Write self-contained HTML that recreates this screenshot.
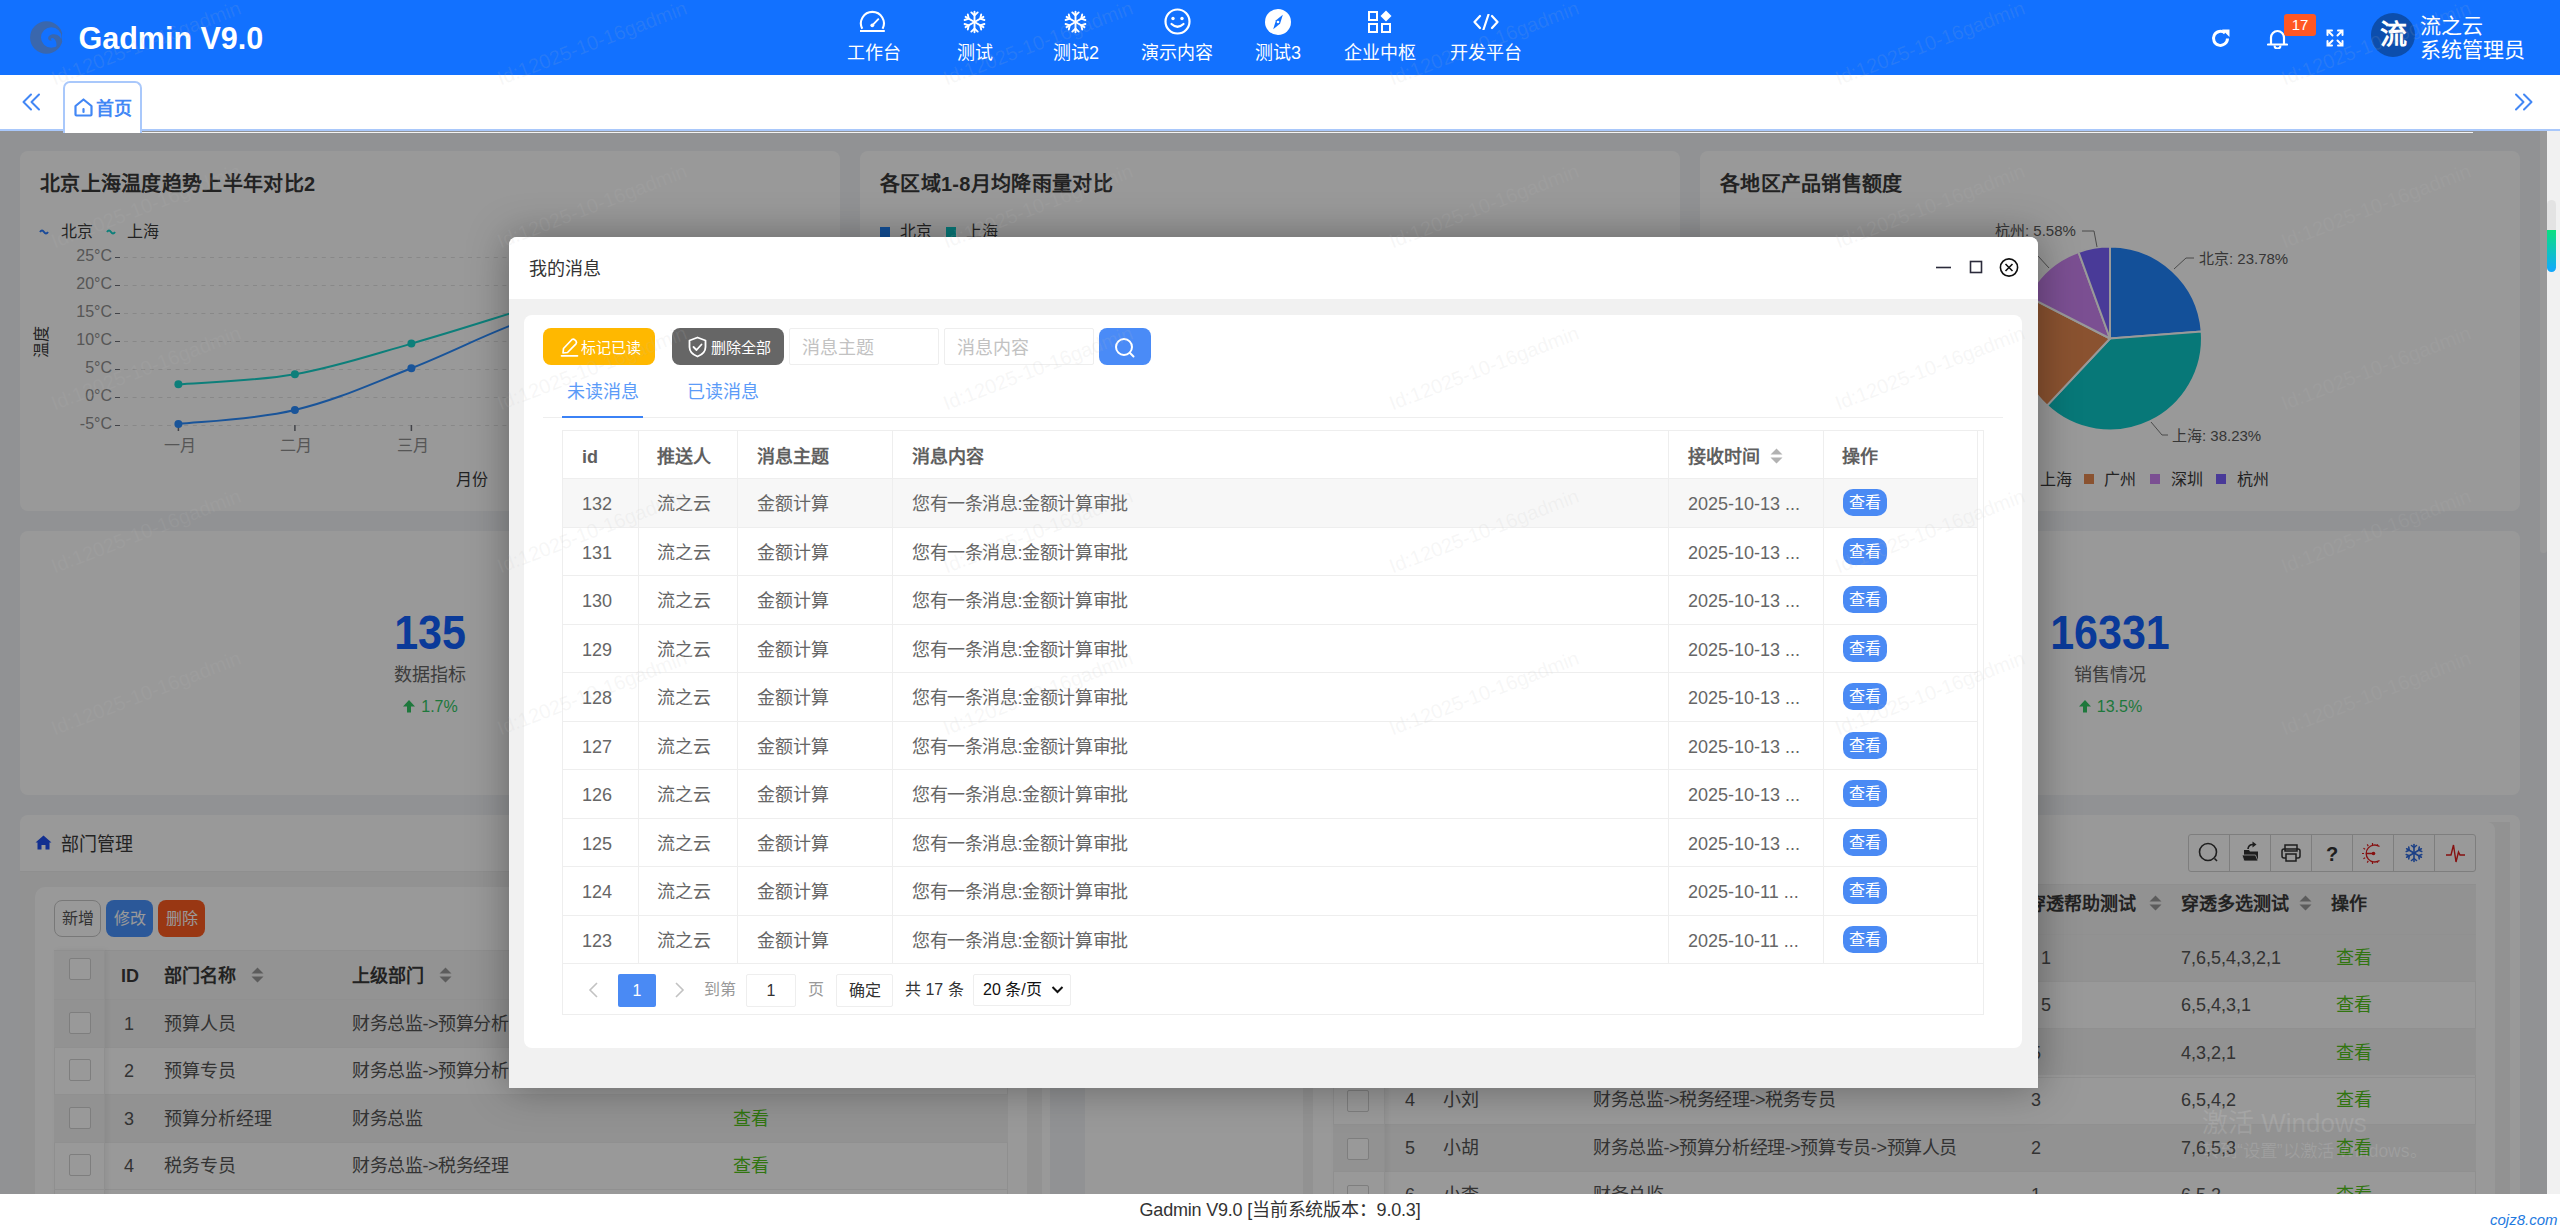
<!DOCTYPE html>
<html lang="zh-CN">
<head>
<meta charset="utf-8">
<style>
*{box-sizing:border-box;margin:0;padding:0}
html,body{width:2560px;height:1229px;overflow:hidden;background:#fff;font-family:"Liberation Sans",sans-serif;color:#333}
.a{position:absolute;white-space:nowrap}
#hdr{position:absolute;left:0;top:0;width:2560px;height:75px;background:#1271ff}
.nav{position:absolute;top:44px;font-size:18px;line-height:18px;color:#fff;text-align:center;width:120px}
.nico{position:absolute}
#tabs{position:absolute;left:0;top:0;width:2560px;height:0}
#dash{position:absolute;left:0;top:0;width:2547px;height:1194px;clip-path:inset(131px 0 0 0);background:#f2f4f7;overflow:hidden}
.card{position:absolute;background:#fff;border-radius:8px}
.ctitle{position:absolute;font-size:20px;line-height:20px;font-weight:bold;color:#333}
#ovl{position:absolute;left:0;top:0;width:2547px;height:1194px;background:rgba(0,0,0,.4)}
#modal{position:absolute;left:509px;top:237px;width:1529px;height:851px;background:#f1f1f1;border-radius:8px 8px 0 0;box-shadow:0 0 40px rgba(0,0,0,.35)}
#mtitle{position:absolute;left:0;top:0;width:1529px;height:62px;background:#fff;border-radius:8px 8px 0 0}
#mcard{position:absolute;left:15px;top:78px;width:1498px;height:733px;background:#fff;border-radius:8px}
#footer{position:absolute;left:0;top:1194px;width:2560px;height:35px;background:#fff}
</style>
</head>
<body>
<!--DASH--><div id="dash">
<div class="a" style="left:20px;top:151px;width:820px;height:360px;background:#fff;border-radius:8px"></div>
<div class="a" style="left:860px;top:151px;width:820px;height:360px;background:#fff;border-radius:8px"></div>
<div class="a" style="left:1700px;top:151px;width:820px;height:360px;background:#fff;border-radius:8px"></div>
<div class="a" style="left:20px;top:531px;width:820px;height:264px;background:#fff;border-radius:8px"></div>
<div class="a" style="left:860px;top:531px;width:820px;height:264px;background:#fff;border-radius:8px"></div>
<div class="a" style="left:1700px;top:531px;width:820px;height:264px;background:#fff;border-radius:8px"></div>
<div class="a" style="left:2540px;top:100px;width:7px;height:453px;background:#fff;border-radius:4px"></div>
<div class="a" style="left:40px;top:174px;font-size:20px;line-height:20px;color:#3a3a3a;font-weight:bold;letter-spacing:0.3px">北京上海温度趋势上半年对比2</div>
<svg class="a" style="left:0;top:0" width="2547" height="1194">
<path d="M40 232 q2 -3 4 0 q2 3 4 0" stroke="#2b7cff" stroke-width="2" fill="none"/>
<path d="M107 232 q2 -3 4 0 q2 3 4 0" stroke="#17d4cc" stroke-width="2" fill="none"/>
<line x1="124" y1="257.5" x2="820" y2="257.5" stroke="#e3e3e3" stroke-width="1" stroke-dasharray="4 4.6"/>
<line x1="115" y1="257.5" x2="120" y2="257.5" stroke="#6e7079" stroke-width="1"/>
<line x1="124" y1="285.5" x2="820" y2="285.5" stroke="#e3e3e3" stroke-width="1" stroke-dasharray="4 4.6"/>
<line x1="115" y1="285.5" x2="120" y2="285.5" stroke="#6e7079" stroke-width="1"/>
<line x1="124" y1="313.5" x2="820" y2="313.5" stroke="#e3e3e3" stroke-width="1" stroke-dasharray="4 4.6"/>
<line x1="115" y1="313.5" x2="120" y2="313.5" stroke="#6e7079" stroke-width="1"/>
<line x1="124" y1="341.5" x2="820" y2="341.5" stroke="#e3e3e3" stroke-width="1" stroke-dasharray="4 4.6"/>
<line x1="115" y1="341.5" x2="120" y2="341.5" stroke="#6e7079" stroke-width="1"/>
<line x1="124" y1="369.5" x2="820" y2="369.5" stroke="#e3e3e3" stroke-width="1" stroke-dasharray="4 4.6"/>
<line x1="115" y1="369.5" x2="120" y2="369.5" stroke="#6e7079" stroke-width="1"/>
<line x1="124" y1="397.5" x2="820" y2="397.5" stroke="#e3e3e3" stroke-width="1" stroke-dasharray="4 4.6"/>
<line x1="115" y1="397.5" x2="120" y2="397.5" stroke="#6e7079" stroke-width="1"/>
<line x1="124" y1="425.5" x2="820" y2="425.5" stroke="#e3e3e3" stroke-width="1" stroke-dasharray="4 4.6"/>
<line x1="115" y1="425.5" x2="120" y2="425.5" stroke="#6e7079" stroke-width="1"/>
<line x1="178.4" y1="425" x2="178.4" y2="431" stroke="#6e7079" stroke-width="1.5"/>
<line x1="294.9" y1="425" x2="294.9" y2="431" stroke="#6e7079" stroke-width="1.5"/>
<line x1="411.4" y1="425" x2="411.4" y2="431" stroke="#6e7079" stroke-width="1.5"/>
<line x1="527.9" y1="425" x2="527.9" y2="431" stroke="#6e7079" stroke-width="1.5"/>
<line x1="644.4" y1="425" x2="644.4" y2="431" stroke="#6e7079" stroke-width="1.5"/>
<line x1="760.9" y1="425" x2="760.9" y2="431" stroke="#6e7079" stroke-width="1.5"/>
<path d="M178.4 384.3 C199.4 382.5 253.0 381.5 294.9 374.2 C336.8 366.9 369.5 355.5 411.4 343.6 C453.3 331.7 486.0 320.9 527.9 308.0 C569.8 295.1 602.5 282.4 644.4 272.0 C686.3 261.6 739.9 254.0 760.9 250.0" fill="none" stroke="#17d4cc" stroke-width="2"/>
<path d="M178.4 424 C199.4 421.5 253.0 420.0 294.9 410.0 C336.8 400.0 369.5 384.6 411.4 368.2 C453.3 351.8 486.0 333.8 527.9 319.0 C569.8 304.2 602.5 295.5 644.4 286.0 C686.3 276.5 739.9 269.6 760.9 266.0" fill="none" stroke="#2b8cff" stroke-width="2"/>
<circle cx="178.4" cy="384.3" r="4" fill="#17d4cc"/>
<circle cx="294.9" cy="374.2" r="4" fill="#17d4cc"/>
<circle cx="411.4" cy="343.6" r="4" fill="#17d4cc"/>
<circle cx="527.9" cy="308" r="4" fill="#17d4cc"/>
<circle cx="644.4" cy="272" r="4" fill="#17d4cc"/>
<circle cx="760.9" cy="250" r="4" fill="#17d4cc"/>
<circle cx="178.4" cy="424" r="4" fill="#2b8cff"/>
<circle cx="294.9" cy="410" r="4" fill="#2b8cff"/>
<circle cx="411.4" cy="368.2" r="4" fill="#2b8cff"/>
<circle cx="527.9" cy="319" r="4" fill="#2b8cff"/>
<circle cx="644.4" cy="286" r="4" fill="#2b8cff"/>
<circle cx="760.9" cy="266" r="4" fill="#2b8cff"/>
<rect x="880" y="227" width="10" height="10" fill="#2185ff"/>
<rect x="946" y="227" width="10" height="10" fill="#0dc8c8"/>
<path d="M2110 338.5 L2110.0 246.5 A92 92 0 0 1 2201.7 331.4 Z" fill="#2185ff" stroke="#fff" stroke-width="2" stroke-linejoin="round"/>
<path d="M2110 338.5 L2201.7 331.4 A92 92 0 0 1 2047.0 405.6 Z" fill="#0dc8c8" stroke="#fff" stroke-width="2" stroke-linejoin="round"/>
<path d="M2110 338.5 L2047.0 405.6 A92 92 0 0 1 2028.0 296.7 Z" fill="#e68950" stroke="#fff" stroke-width="2" stroke-linejoin="round"/>
<path d="M2110 338.5 L2028.0 296.7 A92 92 0 0 1 2078.5 252.0 Z" fill="#cd84f3" stroke="#fff" stroke-width="2" stroke-linejoin="round"/>
<path d="M2110 338.5 L2078.5 252.0 A92 92 0 0 1 2110.0 246.5 Z" fill="#7b61fd" stroke="#fff" stroke-width="2" stroke-linejoin="round"/>
<polyline points="2174,269 2186,258 2194,258" fill="none" stroke="#7d7d7d" stroke-width="1"/>
<polyline points="2151,422 2162,435 2168,435" fill="none" stroke="#7d7d7d" stroke-width="1"/>
<polyline points="2097,247 2094,231 2082,231" fill="none" stroke="#7d7d7d" stroke-width="1"/>
<polyline points="2049,268 2038,256 2030,256" fill="none" stroke="#7d7d7d" stroke-width="1"/>
<rect x="2019" y="474" width="10" height="10" fill="#0dc8c8"/>
<rect x="2084" y="474" width="10" height="10" fill="#e68950"/>
<rect x="2150" y="474" width="10" height="10" fill="#cd84f3"/>
<rect x="2216" y="474" width="10" height="10" fill="#7b61fd"/>
</svg>
<div class="a" style="left:61px;top:224px;font-size:16px;line-height:16px;color:#3a3a3a;">北京</div>
<div class="a" style="left:127px;top:224px;font-size:16px;line-height:16px;color:#3a3a3a;">上海</div>
<div class="a" style="left:40px;top:248px;width:72px;text-align:right;font-size:16px;line-height:16px;color:#8f8f8f">25°C</div>
<div class="a" style="left:40px;top:276px;width:72px;text-align:right;font-size:16px;line-height:16px;color:#8f8f8f">20°C</div>
<div class="a" style="left:40px;top:304px;width:72px;text-align:right;font-size:16px;line-height:16px;color:#8f8f8f">15°C</div>
<div class="a" style="left:40px;top:332px;width:72px;text-align:right;font-size:16px;line-height:16px;color:#8f8f8f">10°C</div>
<div class="a" style="left:40px;top:360px;width:72px;text-align:right;font-size:16px;line-height:16px;color:#8f8f8f">5°C</div>
<div class="a" style="left:40px;top:388px;width:72px;text-align:right;font-size:16px;line-height:16px;color:#8f8f8f">0°C</div>
<div class="a" style="left:40px;top:416px;width:72px;text-align:right;font-size:16px;line-height:16px;color:#8f8f8f">-5°C</div>
<div class="a" style="left:149.9px;top:438px;width:60px;text-align:center;font-size:16px;line-height:16px;color:#8f8f8f">一月</div>
<div class="a" style="left:266.4px;top:438px;width:60px;text-align:center;font-size:16px;line-height:16px;color:#8f8f8f">二月</div>
<div class="a" style="left:382.9px;top:438px;width:60px;text-align:center;font-size:16px;line-height:16px;color:#8f8f8f">三月</div>
<div class="a" style="left:499.4px;top:438px;width:60px;text-align:center;font-size:16px;line-height:16px;color:#8f8f8f">四月</div>
<div class="a" style="left:615.9px;top:438px;width:60px;text-align:center;font-size:16px;line-height:16px;color:#8f8f8f">五月</div>
<div class="a" style="left:732.4px;top:438px;width:60px;text-align:center;font-size:16px;line-height:16px;color:#8f8f8f">六月</div>
<div class="a" style="left:456px;top:472px;font-size:16px;line-height:16px;color:#3a3a3a;">月份</div>
<div class="a" style="left:34px;top:358px;font-size:16px;line-height:16px;color:#3a3a3a;transform:rotate(-90deg);transform-origin:0 0">温度</div>
<div class="a" style="left:880px;top:174px;font-size:20px;line-height:20px;color:#3a3a3a;font-weight:bold;letter-spacing:0.3px">各区域1-8月均降雨量对比</div>
<div class="a" style="left:900px;top:224px;font-size:16px;line-height:16px;color:#3a3a3a;">北京</div>
<div class="a" style="left:966px;top:224px;font-size:16px;line-height:16px;color:#3a3a3a;">上海</div>
<div class="a" style="left:1720px;top:174px;font-size:20px;line-height:20px;color:#3a3a3a;font-weight:bold;letter-spacing:0.3px">各地区产品销售额度</div>
<div class="a" style="left:1995px;top:223px;font-size:15px;line-height:15px;color:#5a5a5a;">杭州: 5.58%</div>
<div class="a" style="left:2199px;top:251px;font-size:15px;line-height:15px;color:#5a5a5a;">北京: 23.78%</div>
<div class="a" style="left:2172px;top:428px;font-size:15px;line-height:15px;color:#5a5a5a;">上海: 38.23%</div>
<div class="a" style="left:2040px;top:472px;font-size:16px;line-height:16px;color:#3a3a3a;">上海</div>
<div class="a" style="left:2104px;top:472px;font-size:16px;line-height:16px;color:#3a3a3a;">广州</div>
<div class="a" style="left:2171px;top:472px;font-size:16px;line-height:16px;color:#3a3a3a;">深圳</div>
<div class="a" style="left:2237px;top:472px;font-size:16px;line-height:16px;color:#3a3a3a;">杭州</div>
<div class="a" style="left:280px;top:612px;width:300px;text-align:center;font-size:43px;line-height:43px;font-weight:bold;color:#1161ff;transform:scaleY(1.1)">135</div>
<div class="a" style="left:280px;top:665.5px;width:300px;text-align:center;font-size:18px;line-height:18px;color:#666">数据指标</div>
<div class="a" style="left:280px;top:698.5px;width:300px;text-align:center;font-size:16px;line-height:16px;color:#32c864"><svg width="14" height="14" viewBox="0 0 14 14" style="vertical-align:-1px;margin-right:5px"><path d="M7 1 L13 7.5 L9 7.5 L9 13.5 L5 13.5 L5 7.5 L1 7.5 Z" fill="#32c864"/></svg>1.7%</div>
<div class="a" style="left:1120px;top:612px;width:300px;text-align:center;font-size:43px;line-height:43px;font-weight:bold;color:#1161ff;transform:scaleY(1.1)">2365</div>
<div class="a" style="left:1120px;top:665.5px;width:300px;text-align:center;font-size:18px;line-height:18px;color:#666">访问量</div>
<div class="a" style="left:1120px;top:698.5px;width:300px;text-align:center;font-size:16px;line-height:16px;color:#32c864"><svg width="14" height="14" viewBox="0 0 14 14" style="vertical-align:-1px;margin-right:5px"><path d="M7 1 L13 7.5 L9 7.5 L9 13.5 L5 13.5 L5 7.5 L1 7.5 Z" fill="#32c864"/></svg>5.2%</div>
<div class="a" style="left:1960px;top:612px;width:300px;text-align:center;font-size:43px;line-height:43px;font-weight:bold;color:#1161ff;transform:scaleY(1.1)">16331</div>
<div class="a" style="left:1960px;top:665.5px;width:300px;text-align:center;font-size:18px;line-height:18px;color:#666">销售情况</div>
<div class="a" style="left:1960px;top:698.5px;width:300px;text-align:center;font-size:16px;line-height:16px;color:#32c864"><svg width="14" height="14" viewBox="0 0 14 14" style="vertical-align:-1px;margin-right:5px"><path d="M7 1 L13 7.5 L9 7.5 L9 13.5 L5 13.5 L5 7.5 L1 7.5 Z" fill="#32c864"/></svg>13.5%</div>
<div class="a" style="left:20px;top:815px;width:1030px;height:420px;background:#fff;border-radius:8px"></div>
<div class="a" style="left:20px;top:871px;width:1022px;height:360px;background:#f4f4f4;"></div>
<div class="a" style="left:20px;top:871px;width:1022px;height:1px;background:#eee;"></div>
<svg class="a" style="left:35px;top:835px" width="17" height="15" viewBox="0 0 17 15"><path d="M8.5 0.5 L0.5 7.5 L2.5 7.5 L2.5 14.5 L6.5 14.5 L6.5 10 L10.5 10 L10.5 14.5 L14.5 14.5 L14.5 7.5 L16.5 7.5 Z" fill="#1e4ff0"/></svg>
<div class="a" style="left:61px;top:834.5px;font-size:18px;line-height:18px;color:#3a3a3a;transform:scaleY(1.1);transform-origin:0 50%">部门管理</div>
<div class="a" style="left:35px;top:887px;width:992px;height:340px;background:#fff;border-radius:10px"></div>
<div class="a" style="left:54px;top:900px;width:47px;height:37px;border:1px solid #c9c9c9;border-radius:8px;background:#fff;font-size:16px;line-height:35px;text-align:center;color:#555">新增</div>
<div class="a" style="left:106px;top:900px;width:47px;height:37px;border-radius:8px;background:#4993ff;font-size:16px;line-height:37px;text-align:center;color:#fff">修改</div>
<div class="a" style="left:158px;top:900px;width:47px;height:37px;border-radius:8px;background:#ff5d21;font-size:16px;line-height:37px;text-align:center;color:#fff">删除</div>
<div class="a" style="left:54px;top:950px;width:954px;height:280px;background:#fff;border-left:1px solid #eee;border-right:1px solid #eee"></div>
<div class="a" style="left:54px;top:950px;width:954px;height:1px;background:#eee;"></div>
<div class="a" style="left:54px;top:951px;width:954px;height:48px;background:#f6f6f6;"></div>
<div class="a" style="left:54px;top:1000px;width:954px;height:47px;background:#f3f3f3;"></div>
<div class="a" style="left:54px;top:1095px;width:954px;height:47px;background:#f3f3f3;"></div>
<div class="a" style="left:54px;top:999px;width:954px;height:1px;background:#f0f0f0;"></div>
<div class="a" style="left:54px;top:1047px;width:954px;height:1px;background:#f0f0f0;"></div>
<div class="a" style="left:54px;top:1094px;width:954px;height:1px;background:#f0f0f0;"></div>
<div class="a" style="left:54px;top:1142px;width:954px;height:1px;background:#f0f0f0;"></div>
<div class="a" style="left:54px;top:1189px;width:954px;height:1px;background:#f0f0f0;"></div>
<div class="a" style="left:54px;top:950px;width:51px;height:280px;background:transparent;box-shadow:2px 0 5px rgba(0,0,0,.06);border-right:1px solid #eee"></div>
<div class="a" style="left:69px;top:958px;width:22px;height:22px;background:#fff;border:1px solid #d2d2d2;border-radius:2px"></div>
<div class="a" style="left:69px;top:1012px;width:22px;height:22px;background:#fff;border:1px solid #d2d2d2;border-radius:2px"></div>
<div class="a" style="left:69px;top:1059px;width:22px;height:22px;background:#fff;border:1px solid #d2d2d2;border-radius:2px"></div>
<div class="a" style="left:69px;top:1107px;width:22px;height:22px;background:#fff;border:1px solid #d2d2d2;border-radius:2px"></div>
<div class="a" style="left:69px;top:1154px;width:22px;height:22px;background:#fff;border:1px solid #d2d2d2;border-radius:2px"></div>
<div class="a" style="left:121px;top:967px;font-size:18px;line-height:18px;color:#3a3a3a;font-weight:bold">ID</div>
<div class="a" style="left:164px;top:967px;font-size:18px;line-height:18px;color:#3a3a3a;font-weight:bold">部门名称</div>
<div class="a" style="left:352px;top:967px;font-size:18px;line-height:18px;color:#3a3a3a;font-weight:bold">上级部门</div>
<svg class="a" style="left:251px;top:967px" width="13" height="16" viewBox="0 0 13 16"><path d="M6.5 0.5 L12.5 6.5 L0.5 6.5 Z M0.5 9.5 L12.5 9.5 L6.5 15.5 Z" fill="#999"/></svg>
<svg class="a" style="left:439px;top:967px" width="13" height="16" viewBox="0 0 13 16"><path d="M6.5 0.5 L12.5 6.5 L0.5 6.5 Z M0.5 9.5 L12.5 9.5 L6.5 15.5 Z" fill="#999"/></svg>
<div class="a" style="left:104px;top:1015.0px;width:50px;text-align:center;font-size:18px;line-height:18px;color:#555">1</div>
<div class="a" style="left:164px;top:1015.0px;font-size:18px;line-height:18px;color:#555;">预算人员</div>
<div class="a" style="left:352px;top:1015.0px;font-size:18px;line-height:18px;color:#555;letter-spacing:-0.4px">财务总监->预算分析经理->预算专员</div>
<div class="a" style="left:733px;top:1015.0px;font-size:18px;line-height:18px;color:#52c41a;">查看</div>
<div class="a" style="left:104px;top:1062.4px;width:50px;text-align:center;font-size:18px;line-height:18px;color:#555">2</div>
<div class="a" style="left:164px;top:1062.4px;font-size:18px;line-height:18px;color:#555;">预算专员</div>
<div class="a" style="left:352px;top:1062.4px;font-size:18px;line-height:18px;color:#555;letter-spacing:-0.4px">财务总监->预算分析经理</div>
<div class="a" style="left:733px;top:1062.4px;font-size:18px;line-height:18px;color:#52c41a;">查看</div>
<div class="a" style="left:104px;top:1109.8px;width:50px;text-align:center;font-size:18px;line-height:18px;color:#555">3</div>
<div class="a" style="left:164px;top:1109.8px;font-size:18px;line-height:18px;color:#555;">预算分析经理</div>
<div class="a" style="left:352px;top:1109.8px;font-size:18px;line-height:18px;color:#555;letter-spacing:-0.4px">财务总监</div>
<div class="a" style="left:733px;top:1109.8px;font-size:18px;line-height:18px;color:#52c41a;">查看</div>
<div class="a" style="left:104px;top:1157.2px;width:50px;text-align:center;font-size:18px;line-height:18px;color:#555">4</div>
<div class="a" style="left:164px;top:1157.2px;font-size:18px;line-height:18px;color:#555;">税务专员</div>
<div class="a" style="left:352px;top:1157.2px;font-size:18px;line-height:18px;color:#555;letter-spacing:-0.4px">财务总监->税务经理</div>
<div class="a" style="left:733px;top:1157.2px;font-size:18px;line-height:18px;color:#52c41a;">查看</div>
<div class="a" style="left:1085px;top:815px;width:1435px;height:420px;background:#fff;border-radius:8px"></div>
<div class="a" style="left:1303px;top:822px;width:1207px;height:420px;background:#f4f4f4;"></div>
<div class="a" style="left:1313px;top:822px;width:1182px;height:420px;background:#fff;border-radius:8px 8px 0 0"></div>
<div class="a" style="left:2188px;top:834px;width:288px;height:38px;border:1px solid #d2d2d2;border-radius:3px;background:#fff"></div>
<div class="a" style="left:2229px;top:835px;width:1px;height:36px;background:#d2d2d2;"></div>
<div class="a" style="left:2270px;top:835px;width:1px;height:36px;background:#d2d2d2;"></div>
<div class="a" style="left:2311px;top:835px;width:1px;height:36px;background:#d2d2d2;"></div>
<div class="a" style="left:2352px;top:835px;width:1px;height:36px;background:#d2d2d2;"></div>
<div class="a" style="left:2393px;top:835px;width:1px;height:36px;background:#d2d2d2;"></div>
<div class="a" style="left:2434px;top:835px;width:1px;height:36px;background:#d2d2d2;"></div>
<svg class="a" style="left:0;top:0" width="2547" height="1194"><circle cx="2208" cy="852" r="8.5" fill="none" stroke="#333" stroke-width="1.6"/><line x1="2214.5" y1="858.5" x2="2217" y2="861" stroke="#333" stroke-width="1.6"/><path d="M2244 852 L2244 850 L2249 850 L2250 851.5 L2258 851.5 L2258 861 L2244 861 Z" fill="#333"/><path d="M2242 855 L2255.5 855 L2258 861 L2244 861 Z" fill="#333" stroke="#fff" stroke-width="0.8"/><path d="M2248 849 Q2248.5 844.5 2253 844.5" fill="none" stroke="#333" stroke-width="1.7"/><path d="M2252.5 841.5 L2256.5 844.5 L2252.5 847.5 Z" fill="#333"/><rect x="2285" y="845" width="12" height="6" fill="none" stroke="#333" stroke-width="1.5"/><rect x="2282" y="849" width="18" height="9" rx="2" fill="none" stroke="#333" stroke-width="1.5"/><rect x="2286" y="854" width="10" height="7" fill="#fff" stroke="#333" stroke-width="1.5"/><text x="2332" y="861" font-family="Liberation Sans" font-size="20" font-weight="bold" text-anchor="middle" fill="#333">?</text><path d="M2379.5 846.5 A8.5 8.5 0 1 0 2379.5 860.5" fill="none" stroke="#e01b1b" stroke-width="1.3"/><line x1="2372.50" y1="845.00" x2="2372.50" y2="843.00" stroke="#e01b1b" stroke-width="1.2"/><line x1="2376.75" y1="846.14" x2="2377.75" y2="844.41" stroke="#e01b1b" stroke-width="1.2"/><line x1="2368.25" y1="846.14" x2="2367.25" y2="844.41" stroke="#e01b1b" stroke-width="1.2"/><line x1="2365.14" y1="849.25" x2="2363.41" y2="848.25" stroke="#e01b1b" stroke-width="1.2"/><line x1="2364.00" y1="853.50" x2="2362.00" y2="853.50" stroke="#e01b1b" stroke-width="1.2"/><line x1="2365.14" y1="857.75" x2="2363.41" y2="858.75" stroke="#e01b1b" stroke-width="1.2"/><line x1="2368.25" y1="860.86" x2="2367.25" y2="862.59" stroke="#e01b1b" stroke-width="1.2"/><line x1="2372.50" y1="862.00" x2="2372.50" y2="864.00" stroke="#e01b1b" stroke-width="1.2"/><line x1="2376.75" y1="860.86" x2="2377.75" y2="862.59" stroke="#e01b1b" stroke-width="1.2"/><line x1="2366" y1="853.5" x2="2373" y2="853.5" stroke="#e01b1b" stroke-width="1.5"/><circle cx="2373.5" cy="853.5" r="1.8" fill="#e01b1b"/><g transform="translate(2414 853)" stroke="#2f6be0" stroke-width="1.6" fill="none" stroke-linecap="round"><g transform="rotate(0)"><line x1="0" y1="0" x2="0" y2="-8.5"/><path d="M-2.5 -7.5 L0 -5.5 L2.5 -7.5"/></g><g transform="rotate(60)"><line x1="0" y1="0" x2="0" y2="-8.5"/><path d="M-2.5 -7.5 L0 -5.5 L2.5 -7.5"/></g><g transform="rotate(120)"><line x1="0" y1="0" x2="0" y2="-8.5"/><path d="M-2.5 -7.5 L0 -5.5 L2.5 -7.5"/></g><g transform="rotate(180)"><line x1="0" y1="0" x2="0" y2="-8.5"/><path d="M-2.5 -7.5 L0 -5.5 L2.5 -7.5"/></g><g transform="rotate(240)"><line x1="0" y1="0" x2="0" y2="-8.5"/><path d="M-2.5 -7.5 L0 -5.5 L2.5 -7.5"/></g><g transform="rotate(300)"><line x1="0" y1="0" x2="0" y2="-8.5"/><path d="M-2.5 -7.5 L0 -5.5 L2.5 -7.5"/></g></g><polyline points="2446,855 2451,855 2453.5,845 2456,862 2458.5,852 2460,855 2465,855" fill="none" stroke="#e01b1b" stroke-width="1.4"/></svg>
<div class="a" style="left:1333px;top:884px;width:1143px;height:360px;background:#fff;border-left:1px solid #eee;border-right:1px solid #eee"></div>
<div class="a" style="left:1333px;top:884px;width:1143px;height:1px;background:#eee;"></div>
<div class="a" style="left:1333px;top:885px;width:1143px;height:49px;background:#f4f4f4;"></div>
<div class="a" style="left:1333px;top:935px;width:1143px;height:46px;background:#f3f3f3;"></div>
<div class="a" style="left:1333px;top:1029px;width:1143px;height:46px;background:#f3f3f3;"></div>
<div class="a" style="left:1333px;top:1125px;width:1143px;height:46px;background:#f3f3f3;"></div>
<div class="a" style="left:1333px;top:934px;width:1143px;height:1px;background:#f0f0f0;"></div>
<div class="a" style="left:1333px;top:981px;width:1143px;height:1px;background:#f0f0f0;"></div>
<div class="a" style="left:1333px;top:1028px;width:1143px;height:1px;background:#f0f0f0;"></div>
<div class="a" style="left:1333px;top:1077px;width:1143px;height:1px;background:#f0f0f0;"></div>
<div class="a" style="left:1333px;top:1124px;width:1143px;height:1px;background:#f0f0f0;"></div>
<div class="a" style="left:1333px;top:1171px;width:1143px;height:1px;background:#f0f0f0;"></div>
<div class="a" style="left:1333px;top:884px;width:52px;height:360px;background:transparent;box-shadow:2px 0 5px rgba(0,0,0,.06);border-right:1px solid #eee"></div>
<div class="a" style="left:2028px;top:895px;font-size:18px;line-height:18px;color:#3a3a3a;font-weight:bold">穿透帮助测试</div>
<svg class="a" style="left:2149px;top:895px" width="13" height="16" viewBox="0 0 13 16"><path d="M6.5 0.5 L12.5 6.5 L0.5 6.5 Z M0.5 9.5 L12.5 9.5 L6.5 15.5 Z" fill="#999"/></svg>
<div class="a" style="left:2181px;top:895px;font-size:18px;line-height:18px;color:#3a3a3a;font-weight:bold">穿透多选测试</div>
<svg class="a" style="left:2299px;top:895px" width="13" height="16" viewBox="0 0 13 16"><path d="M6.5 0.5 L12.5 6.5 L0.5 6.5 Z M0.5 9.5 L12.5 9.5 L6.5 15.5 Z" fill="#999"/></svg>
<div class="a" style="left:2331px;top:895px;font-size:18px;line-height:18px;color:#3a3a3a;font-weight:bold">操作</div>
<div class="a" style="left:1347px;top:948.0px;width:22px;height:22px;background:#fff;border:1px solid #d2d2d2;border-radius:2px"></div>
<div class="a" style="left:1385px;top:949.0px;width:50px;text-align:center;font-size:18px;line-height:18px;color:#555">1</div>
<div class="a" style="left:1443px;top:949.0px;font-size:18px;line-height:18px;color:#555;"></div>
<div class="a" style="left:1593px;top:949.0px;font-size:18px;line-height:18px;color:#555;letter-spacing:-0.4px"></div>
<div class="a" style="left:2031px;top:949.0px;font-size:18px;line-height:18px;color:#555;">&nbsp;&nbsp;1</div>
<div class="a" style="left:2181px;top:949.0px;font-size:18px;line-height:18px;color:#555;">7,6,5,4,3,2,1</div>
<div class="a" style="left:2336px;top:949.0px;font-size:18px;line-height:18px;color:#52c41a;">查看</div>
<div class="a" style="left:1347px;top:995.4px;width:22px;height:22px;background:#fff;border:1px solid #d2d2d2;border-radius:2px"></div>
<div class="a" style="left:1385px;top:996.4px;width:50px;text-align:center;font-size:18px;line-height:18px;color:#555">2</div>
<div class="a" style="left:1443px;top:996.4px;font-size:18px;line-height:18px;color:#555;"></div>
<div class="a" style="left:1593px;top:996.4px;font-size:18px;line-height:18px;color:#555;letter-spacing:-0.4px"></div>
<div class="a" style="left:2031px;top:996.4px;font-size:18px;line-height:18px;color:#555;">&nbsp;&nbsp;5</div>
<div class="a" style="left:2181px;top:996.4px;font-size:18px;line-height:18px;color:#555;">6,5,4,3,1</div>
<div class="a" style="left:2336px;top:996.4px;font-size:18px;line-height:18px;color:#52c41a;">查看</div>
<div class="a" style="left:1347px;top:1042.8px;width:22px;height:22px;background:#fff;border:1px solid #d2d2d2;border-radius:2px"></div>
<div class="a" style="left:1385px;top:1043.8px;width:50px;text-align:center;font-size:18px;line-height:18px;color:#555">3</div>
<div class="a" style="left:1443px;top:1043.8px;font-size:18px;line-height:18px;color:#555;"></div>
<div class="a" style="left:1593px;top:1043.8px;font-size:18px;line-height:18px;color:#555;letter-spacing:-0.4px"></div>
<div class="a" style="left:2031px;top:1043.8px;font-size:18px;line-height:18px;color:#555;">5</div>
<div class="a" style="left:2181px;top:1043.8px;font-size:18px;line-height:18px;color:#555;">4,3,2,1</div>
<div class="a" style="left:2336px;top:1043.8px;font-size:18px;line-height:18px;color:#52c41a;">查看</div>
<div class="a" style="left:1347px;top:1090.2px;width:22px;height:22px;background:#fff;border:1px solid #d2d2d2;border-radius:2px"></div>
<div class="a" style="left:1385px;top:1091.2px;width:50px;text-align:center;font-size:18px;line-height:18px;color:#555">4</div>
<div class="a" style="left:1443px;top:1091.2px;font-size:18px;line-height:18px;color:#555;">小刘</div>
<div class="a" style="left:1593px;top:1091.2px;font-size:18px;line-height:18px;color:#555;letter-spacing:-0.4px">财务总监->税务经理->税务专员</div>
<div class="a" style="left:2031px;top:1091.2px;font-size:18px;line-height:18px;color:#555;">3</div>
<div class="a" style="left:2181px;top:1091.2px;font-size:18px;line-height:18px;color:#555;">6,5,4,2</div>
<div class="a" style="left:2336px;top:1091.2px;font-size:18px;line-height:18px;color:#52c41a;">查看</div>
<div class="a" style="left:1347px;top:1137.6px;width:22px;height:22px;background:#fff;border:1px solid #d2d2d2;border-radius:2px"></div>
<div class="a" style="left:1385px;top:1138.6px;width:50px;text-align:center;font-size:18px;line-height:18px;color:#555">5</div>
<div class="a" style="left:1443px;top:1138.6px;font-size:18px;line-height:18px;color:#555;">小胡</div>
<div class="a" style="left:1593px;top:1138.6px;font-size:18px;line-height:18px;color:#555;letter-spacing:-0.4px">财务总监->预算分析经理->预算专员->预算人员</div>
<div class="a" style="left:2031px;top:1138.6px;font-size:18px;line-height:18px;color:#555;">2</div>
<div class="a" style="left:2181px;top:1138.6px;font-size:18px;line-height:18px;color:#555;">7,6,5,3</div>
<div class="a" style="left:2336px;top:1138.6px;font-size:18px;line-height:18px;color:#52c41a;">查看</div>
<div class="a" style="left:1347px;top:1185.0px;width:22px;height:22px;background:#fff;border:1px solid #d2d2d2;border-radius:2px"></div>
<div class="a" style="left:1385px;top:1186.0px;width:50px;text-align:center;font-size:18px;line-height:18px;color:#555">6</div>
<div class="a" style="left:1443px;top:1186.0px;font-size:18px;line-height:18px;color:#555;">小李</div>
<div class="a" style="left:1593px;top:1186.0px;font-size:18px;line-height:18px;color:#555;letter-spacing:-0.4px">财务总监</div>
<div class="a" style="left:2031px;top:1186.0px;font-size:18px;line-height:18px;color:#555;">1</div>
<div class="a" style="left:2181px;top:1186.0px;font-size:18px;line-height:18px;color:#555;">6,5,2</div>
<div class="a" style="left:2336px;top:1186.0px;font-size:18px;line-height:18px;color:#52c41a;">查看</div>
<div id="ovl"></div>
<div class="a" style="left:509px;top:237px;width:1529px;height:851px;background:#f1f1f1;border-radius:8px 8px 0 0;box-shadow:0 0 40px rgba(0,0,0,.35)"></div>
<div class="a" style="left:509px;top:237px;width:1529px;height:62px;background:#fff;border-radius:8px 8px 0 0"></div>
<div class="a" style="left:529px;top:260px;font-size:18px;line-height:18px;color:#333;">我的消息</div>
<svg class="a" style="left:1930px;top:255px" width="95" height="26" viewBox="0 0 95 26"><line x1="6" y1="12.5" x2="21" y2="12.5" stroke="#2b2b3b" stroke-width="1.6"/><rect x="40.5" y="6.5" width="11" height="11" fill="none" stroke="#2b2b3b" stroke-width="1.6"/><circle cx="79" cy="12.5" r="8.6" fill="none" stroke="#111" stroke-width="1.6"/><path d="M75.5 9 L82.5 16 M82.5 9 L75.5 16" stroke="#111" stroke-width="1.6"/></svg>
<div class="a" style="left:524px;top:315px;width:1498px;height:733px;background:#fff;border-radius:8px"></div>
<div class="a" style="left:543px;top:328px;width:112px;height:37px;background:#ffb800;border-radius:8px;color:#fff;font-size:15px;line-height:39px;padding-left:38px">标记已读</div>
<svg class="a" style="left:559px;top:337px" width="20" height="20" viewBox="0 0 20 20"><path d="M13 2.5 Q14.5 1.5 16 3 L17 4 Q18 5.5 17 6.8 L8.5 15.5 L4 16 L4.5 11.5 Z" fill="none" stroke="#fff" stroke-width="1.7" stroke-linejoin="round"/><line x1="2.5" y1="18.8" x2="18.5" y2="18.8" stroke="#fff" stroke-width="1.7" stroke-linecap="round"/></svg>
<div class="a" style="left:672px;top:328px;width:112px;height:37px;background:#666;border-radius:8px;color:#fff;font-size:15px;line-height:39px;padding-left:38.5px">删除全部</div>
<svg class="a" style="left:687px;top:336px" width="21" height="22" viewBox="0 0 21 22"><path d="M10.5 1.5 L18.5 4.5 L18.5 11 Q18.5 17.5 10.5 20.5 Q2.5 17.5 2.5 11 L2.5 4.5 Z" fill="none" stroke="#fff" stroke-width="1.8" stroke-linejoin="round"/><path d="M6.5 11 L9.5 14 L14.5 8.5" fill="none" stroke="#fff" stroke-width="1.8" stroke-linecap="round" stroke-linejoin="round"/></svg>
<div class="a" style="left:789px;top:328px;width:150px;height:37px;border:1px solid #eee;border-radius:2px;background:#fff;color:#c2c2c2;font-size:18px;line-height:38.5px;padding-left:12px">消息主题</div>
<div class="a" style="left:944px;top:328px;width:150px;height:37px;border:1px solid #eee;border-radius:2px;background:#fff;color:#c2c2c2;font-size:18px;line-height:38.5px;padding-left:12px">消息内容</div>
<div class="a" style="left:1099px;top:328px;width:52px;height:37px;background:#4a8bf7;border-radius:8px"></div>
<svg class="a" style="left:1114px;top:337px" width="22" height="22" viewBox="0 0 22 22"><circle cx="10" cy="10" r="8" fill="none" stroke="#fff" stroke-width="2"/><line x1="16" y1="16" x2="19.5" y2="19.5" stroke="#fff" stroke-width="2" stroke-linecap="round"/></svg>
<div class="a" style="left:567px;top:382.5px;font-size:18px;line-height:18px;color:#5b9bf8;">未读消息</div>
<div class="a" style="left:687px;top:382.5px;font-size:18px;line-height:18px;color:#5b9bf8;">已读消息</div>
<div class="a" style="left:543px;top:417px;width:1460px;height:1px;background:#eee;"></div>
<div class="a" style="left:562px;top:416px;width:81px;height:2px;background:#3b82f6;"></div>
<div class="a" style="left:562px;top:430px;width:1422px;height:585px;background:#fff;border:1px solid #eee"></div>
<div class="a" style="left:563px;top:478px;width:1414px;height:49px;background:#f7f7f7;"></div>
<div class="a" style="left:638px;top:430px;width:1px;height:534px;background:#eee;"></div>
<div class="a" style="left:737px;top:430px;width:1px;height:534px;background:#eee;"></div>
<div class="a" style="left:892px;top:430px;width:1px;height:534px;background:#eee;"></div>
<div class="a" style="left:1668px;top:430px;width:1px;height:534px;background:#eee;"></div>
<div class="a" style="left:1823px;top:430px;width:1px;height:534px;background:#eee;"></div>
<div class="a" style="left:1977px;top:430px;width:1px;height:534px;background:#eee;"></div>
<div class="a" style="left:562px;top:478px;width:1415px;height:1px;background:#eee;"></div>
<div class="a" style="left:562px;top:527px;width:1415px;height:1px;background:#eee;"></div>
<div class="a" style="left:562px;top:575px;width:1415px;height:1px;background:#eee;"></div>
<div class="a" style="left:562px;top:624px;width:1415px;height:1px;background:#eee;"></div>
<div class="a" style="left:562px;top:672px;width:1415px;height:1px;background:#eee;"></div>
<div class="a" style="left:562px;top:721px;width:1415px;height:1px;background:#eee;"></div>
<div class="a" style="left:562px;top:769px;width:1415px;height:1px;background:#eee;"></div>
<div class="a" style="left:562px;top:818px;width:1415px;height:1px;background:#eee;"></div>
<div class="a" style="left:562px;top:866px;width:1415px;height:1px;background:#eee;"></div>
<div class="a" style="left:562px;top:915px;width:1415px;height:1px;background:#eee;"></div>
<div class="a" style="left:562px;top:963px;width:1422px;height:1px;background:#eee;"></div>
<div class="a" style="left:582px;top:448px;font-size:18px;line-height:18px;color:#5f5f5f;font-weight:bold">id</div>
<div class="a" style="left:657px;top:448px;font-size:18px;line-height:18px;color:#5f5f5f;font-weight:bold">推送人</div>
<div class="a" style="left:757px;top:448px;font-size:18px;line-height:18px;color:#5f5f5f;font-weight:bold">消息主题</div>
<div class="a" style="left:912px;top:448px;font-size:18px;line-height:18px;color:#5f5f5f;font-weight:bold">消息内容</div>
<div class="a" style="left:1688px;top:448px;font-size:18px;line-height:18px;color:#5f5f5f;font-weight:bold">接收时间</div>
<div class="a" style="left:1842px;top:448px;font-size:18px;line-height:18px;color:#5f5f5f;font-weight:bold">操作</div>
<svg class="a" style="left:1770px;top:448px" width="13" height="16" viewBox="0 0 13 16"><path d="M6.5 0.5 L12.5 6.5 L0.5 6.5 Z M0.5 9.5 L12.5 9.5 L6.5 15.5 Z" fill="#b2b2b2"/></svg>
<div class="a" style="left:582px;top:494.5px;font-size:18px;line-height:18px;color:#666;">132</div>
<div class="a" style="left:657px;top:494.5px;font-size:18px;line-height:18px;color:#666;">流之云</div>
<div class="a" style="left:757px;top:494.5px;font-size:18px;line-height:18px;color:#666;">金额计算</div>
<div class="a" style="left:912px;top:494.5px;font-size:18px;line-height:18px;color:#666;letter-spacing:-0.4px">您有一条消息:金额计算审批</div>
<div class="a" style="left:1688px;top:494.5px;font-size:18px;line-height:18px;color:#666;">2025-10-13 ...</div>
<div class="a" style="left:1843px;top:488.5px;width:44px;height:27px;background:#4a8af4;border-radius:10px;color:#fff;font-size:16px;line-height:27px;text-align:center">查看</div>
<div class="a" style="left:582px;top:543.5px;font-size:18px;line-height:18px;color:#666;">131</div>
<div class="a" style="left:657px;top:543.5px;font-size:18px;line-height:18px;color:#666;">流之云</div>
<div class="a" style="left:757px;top:543.5px;font-size:18px;line-height:18px;color:#666;">金额计算</div>
<div class="a" style="left:912px;top:543.5px;font-size:18px;line-height:18px;color:#666;letter-spacing:-0.4px">您有一条消息:金额计算审批</div>
<div class="a" style="left:1688px;top:543.5px;font-size:18px;line-height:18px;color:#666;">2025-10-13 ...</div>
<div class="a" style="left:1843px;top:537.5px;width:44px;height:27px;background:#4a8af4;border-radius:10px;color:#fff;font-size:16px;line-height:27px;text-align:center">查看</div>
<div class="a" style="left:582px;top:591.5px;font-size:18px;line-height:18px;color:#666;">130</div>
<div class="a" style="left:657px;top:591.5px;font-size:18px;line-height:18px;color:#666;">流之云</div>
<div class="a" style="left:757px;top:591.5px;font-size:18px;line-height:18px;color:#666;">金额计算</div>
<div class="a" style="left:912px;top:591.5px;font-size:18px;line-height:18px;color:#666;letter-spacing:-0.4px">您有一条消息:金额计算审批</div>
<div class="a" style="left:1688px;top:591.5px;font-size:18px;line-height:18px;color:#666;">2025-10-13 ...</div>
<div class="a" style="left:1843px;top:585.5px;width:44px;height:27px;background:#4a8af4;border-radius:10px;color:#fff;font-size:16px;line-height:27px;text-align:center">查看</div>
<div class="a" style="left:582px;top:640.5px;font-size:18px;line-height:18px;color:#666;">129</div>
<div class="a" style="left:657px;top:640.5px;font-size:18px;line-height:18px;color:#666;">流之云</div>
<div class="a" style="left:757px;top:640.5px;font-size:18px;line-height:18px;color:#666;">金额计算</div>
<div class="a" style="left:912px;top:640.5px;font-size:18px;line-height:18px;color:#666;letter-spacing:-0.4px">您有一条消息:金额计算审批</div>
<div class="a" style="left:1688px;top:640.5px;font-size:18px;line-height:18px;color:#666;">2025-10-13 ...</div>
<div class="a" style="left:1843px;top:634.5px;width:44px;height:27px;background:#4a8af4;border-radius:10px;color:#fff;font-size:16px;line-height:27px;text-align:center">查看</div>
<div class="a" style="left:582px;top:688.5px;font-size:18px;line-height:18px;color:#666;">128</div>
<div class="a" style="left:657px;top:688.5px;font-size:18px;line-height:18px;color:#666;">流之云</div>
<div class="a" style="left:757px;top:688.5px;font-size:18px;line-height:18px;color:#666;">金额计算</div>
<div class="a" style="left:912px;top:688.5px;font-size:18px;line-height:18px;color:#666;letter-spacing:-0.4px">您有一条消息:金额计算审批</div>
<div class="a" style="left:1688px;top:688.5px;font-size:18px;line-height:18px;color:#666;">2025-10-13 ...</div>
<div class="a" style="left:1843px;top:682.5px;width:44px;height:27px;background:#4a8af4;border-radius:10px;color:#fff;font-size:16px;line-height:27px;text-align:center">查看</div>
<div class="a" style="left:582px;top:737.5px;font-size:18px;line-height:18px;color:#666;">127</div>
<div class="a" style="left:657px;top:737.5px;font-size:18px;line-height:18px;color:#666;">流之云</div>
<div class="a" style="left:757px;top:737.5px;font-size:18px;line-height:18px;color:#666;">金额计算</div>
<div class="a" style="left:912px;top:737.5px;font-size:18px;line-height:18px;color:#666;letter-spacing:-0.4px">您有一条消息:金额计算审批</div>
<div class="a" style="left:1688px;top:737.5px;font-size:18px;line-height:18px;color:#666;">2025-10-13 ...</div>
<div class="a" style="left:1843px;top:731.5px;width:44px;height:27px;background:#4a8af4;border-radius:10px;color:#fff;font-size:16px;line-height:27px;text-align:center">查看</div>
<div class="a" style="left:582px;top:785.5px;font-size:18px;line-height:18px;color:#666;">126</div>
<div class="a" style="left:657px;top:785.5px;font-size:18px;line-height:18px;color:#666;">流之云</div>
<div class="a" style="left:757px;top:785.5px;font-size:18px;line-height:18px;color:#666;">金额计算</div>
<div class="a" style="left:912px;top:785.5px;font-size:18px;line-height:18px;color:#666;letter-spacing:-0.4px">您有一条消息:金额计算审批</div>
<div class="a" style="left:1688px;top:785.5px;font-size:18px;line-height:18px;color:#666;">2025-10-13 ...</div>
<div class="a" style="left:1843px;top:779.5px;width:44px;height:27px;background:#4a8af4;border-radius:10px;color:#fff;font-size:16px;line-height:27px;text-align:center">查看</div>
<div class="a" style="left:582px;top:834.5px;font-size:18px;line-height:18px;color:#666;">125</div>
<div class="a" style="left:657px;top:834.5px;font-size:18px;line-height:18px;color:#666;">流之云</div>
<div class="a" style="left:757px;top:834.5px;font-size:18px;line-height:18px;color:#666;">金额计算</div>
<div class="a" style="left:912px;top:834.5px;font-size:18px;line-height:18px;color:#666;letter-spacing:-0.4px">您有一条消息:金额计算审批</div>
<div class="a" style="left:1688px;top:834.5px;font-size:18px;line-height:18px;color:#666;">2025-10-13 ...</div>
<div class="a" style="left:1843px;top:828.5px;width:44px;height:27px;background:#4a8af4;border-radius:10px;color:#fff;font-size:16px;line-height:27px;text-align:center">查看</div>
<div class="a" style="left:582px;top:882.5px;font-size:18px;line-height:18px;color:#666;">124</div>
<div class="a" style="left:657px;top:882.5px;font-size:18px;line-height:18px;color:#666;">流之云</div>
<div class="a" style="left:757px;top:882.5px;font-size:18px;line-height:18px;color:#666;">金额计算</div>
<div class="a" style="left:912px;top:882.5px;font-size:18px;line-height:18px;color:#666;letter-spacing:-0.4px">您有一条消息:金额计算审批</div>
<div class="a" style="left:1688px;top:882.5px;font-size:18px;line-height:18px;color:#666;">2025-10-11 ...</div>
<div class="a" style="left:1843px;top:876.5px;width:44px;height:27px;background:#4a8af4;border-radius:10px;color:#fff;font-size:16px;line-height:27px;text-align:center">查看</div>
<div class="a" style="left:582px;top:931.5px;font-size:18px;line-height:18px;color:#666;">123</div>
<div class="a" style="left:657px;top:931.5px;font-size:18px;line-height:18px;color:#666;">流之云</div>
<div class="a" style="left:757px;top:931.5px;font-size:18px;line-height:18px;color:#666;">金额计算</div>
<div class="a" style="left:912px;top:931.5px;font-size:18px;line-height:18px;color:#666;letter-spacing:-0.4px">您有一条消息:金额计算审批</div>
<div class="a" style="left:1688px;top:931.5px;font-size:18px;line-height:18px;color:#666;">2025-10-11 ...</div>
<div class="a" style="left:1843px;top:925.5px;width:44px;height:27px;background:#4a8af4;border-radius:10px;color:#fff;font-size:16px;line-height:27px;text-align:center">查看</div>
<svg class="a" style="left:587px;top:981px" width="14" height="18" viewBox="0 0 14 18"><path d="M10 2 L3 9 L10 16" fill="none" stroke="#c2c2c2" stroke-width="1.6"/></svg>
<div class="a" style="left:618px;top:974px;width:38px;height:33px;background:#4a8af4;border-radius:2px;color:#fff;font-size:16px;line-height:33px;text-align:center">1</div>
<svg class="a" style="left:672px;top:981px" width="14" height="18" viewBox="0 0 14 18"><path d="M4 2 L11 9 L4 16" fill="none" stroke="#c2c2c2" stroke-width="1.6"/></svg>
<div class="a" style="left:704px;top:982px;font-size:16px;line-height:16px;color:#999;">到第</div>
<div class="a" style="left:746px;top:974px;width:50px;height:33px;border:1px solid #eee;border-radius:2px;color:#333;font-size:16px;line-height:31px;text-align:center">1</div>
<div class="a" style="left:808px;top:982px;font-size:16px;line-height:16px;color:#999;">页</div>
<div class="a" style="left:836px;top:974px;width:57px;height:33px;border:1px solid #eee;border-radius:2px;color:#333;font-size:16px;line-height:31px;text-align:center">确定</div>
<div class="a" style="left:905px;top:982px;font-size:16px;line-height:16px;color:#333;">共 17 条</div>
<div class="a" style="left:973px;top:974px;width:98px;height:32px;border:1px solid #eee;border-radius:2px;color:#111;font-size:16px;line-height:30px;padding-left:9px">20 条/页</div>
<svg class="a" style="left:1051px;top:985px" width="13" height="10" viewBox="0 0 13 10"><path d="M1.5 2 L6.5 7 L11.5 2" fill="none" stroke="#111" stroke-width="2"/></svg>
<div class="a" style="left:2202px;top:1108px;font-size:26px;line-height:30px;color:rgba(255,255,255,.12)">激活 Windows</div>
<div class="a" style="left:2203px;top:1141px;font-size:17.5px;line-height:20px;color:rgba(255,255,255,.12)">转到“设置”以激活 Windows。</div>
<div class="a" style="left:63px;top:132px;width:2410px;height:1px;background:#f4f4f4"></div>
</div><!--/DASH-->
<div id="hdr">
<svg class="a" style="left:26px;top:17px" width="42" height="42" viewBox="0 0 42 42">
<path fill-rule="evenodd" fill="#3a67ad" d="M4.1 20.5 A16.3 16.3 0 1 0 36.7 20.5 A16.3 16.3 0 1 0 4.1 20.5 Z M15 20.5 A10.3 10.3 0 1 0 35.6 20.5 A10.3 10.3 0 1 0 15 20.5 Z"/>
<path fill="#1271ff" d="M36 17.5 L38 14 L39 24 L36 24 Z"/>
<path fill="#3a67ad" d="M36 25 C35.6 20 32 17.2 28 17.2 C24.5 17.2 22 19 22.2 21.5 C22.4 23.5 24.5 24 26 23.3 C24.8 23 24.6 21.8 25.5 21.2 C26.8 20.5 28 21.5 28.8 22.5 C30.3 24.3 30.8 27 30.4 29.6 L33 28 L36 25 Z"/>
</svg>
<div class="a" style="left:78.5px;top:22.5px;font-size:30.5px;line-height:30.5px;font-weight:bold;color:#fff">Gadmin V9.0</div>
<div class="a" style="left:858px;top:9px;line-height:0"><svg width="28" height="24" viewBox="0 0 28 24"><path d="M4.25 19.8 A11.5 11.5 0 1 1 24.55 19.8" fill="none" stroke="#fff" stroke-width="2.1"/><line x1="2" y1="22" x2="26.8" y2="22" stroke="#fff" stroke-width="2"/><path d="M14.3 16.3 L20.3 10.2" stroke="#fff" stroke-width="1.9" stroke-linecap="round"/><circle cx="14.3" cy="16.3" r="1.9" fill="#fff"/></svg></div>
<div class="nav" style="left:814px">工作台</div>
<div class="a" style="left:962.5px;top:9.5px;line-height:0"><svg width="23" height="24" viewBox="-11.5 -12 23 24"><g stroke="#fff" stroke-width="1.9" stroke-linecap="round" fill="none"><g transform="rotate(0)"><line x1="0" y1="0" x2="0" y2="-10.3"/><path d="M-3.2 -9.6 L0 -6.6 L3.2 -9.6"/></g><g transform="rotate(60)"><line x1="0" y1="0" x2="0" y2="-10.3"/><path d="M-3.2 -9.6 L0 -6.6 L3.2 -9.6"/></g><g transform="rotate(120)"><line x1="0" y1="0" x2="0" y2="-10.3"/><path d="M-3.2 -9.6 L0 -6.6 L3.2 -9.6"/></g><g transform="rotate(180)"><line x1="0" y1="0" x2="0" y2="-10.3"/><path d="M-3.2 -9.6 L0 -6.6 L3.2 -9.6"/></g><g transform="rotate(240)"><line x1="0" y1="0" x2="0" y2="-10.3"/><path d="M-3.2 -9.6 L0 -6.6 L3.2 -9.6"/></g><g transform="rotate(300)"><line x1="0" y1="0" x2="0" y2="-10.3"/><path d="M-3.2 -9.6 L0 -6.6 L3.2 -9.6"/></g></g></svg></div>
<div class="nav" style="left:915px">测试</div>
<div class="a" style="left:1063.5px;top:9.5px;line-height:0"><svg width="23" height="24" viewBox="-11.5 -12 23 24"><g stroke="#fff" stroke-width="1.9" stroke-linecap="round" fill="none"><g transform="rotate(0)"><line x1="0" y1="0" x2="0" y2="-10.3"/><path d="M-3.2 -9.6 L0 -6.6 L3.2 -9.6"/></g><g transform="rotate(60)"><line x1="0" y1="0" x2="0" y2="-10.3"/><path d="M-3.2 -9.6 L0 -6.6 L3.2 -9.6"/></g><g transform="rotate(120)"><line x1="0" y1="0" x2="0" y2="-10.3"/><path d="M-3.2 -9.6 L0 -6.6 L3.2 -9.6"/></g><g transform="rotate(180)"><line x1="0" y1="0" x2="0" y2="-10.3"/><path d="M-3.2 -9.6 L0 -6.6 L3.2 -9.6"/></g><g transform="rotate(240)"><line x1="0" y1="0" x2="0" y2="-10.3"/><path d="M-3.2 -9.6 L0 -6.6 L3.2 -9.6"/></g><g transform="rotate(300)"><line x1="0" y1="0" x2="0" y2="-10.3"/><path d="M-3.2 -9.6 L0 -6.6 L3.2 -9.6"/></g></g></svg></div>
<div class="nav" style="left:1016px">测试2</div>
<div class="a" style="left:1164px;top:8px;line-height:0"><svg width="27" height="27" viewBox="0 0 27 27"><circle cx="13.5" cy="13.5" r="12" fill="none" stroke="#fff" stroke-width="2.2"/><circle cx="9" cy="10.5" r="1.7" fill="#fff"/><circle cx="18" cy="10.5" r="1.7" fill="#fff"/><path d="M7.5 16 Q13.5 21.5 19.5 16" fill="none" stroke="#fff" stroke-width="2.2" stroke-linecap="round"/></svg></div>
<div class="nav" style="left:1117px">演示内容</div>
<div class="a" style="left:1265px;top:9px;line-height:0"><svg width="26" height="26" viewBox="0 0 26 26"><circle cx="13" cy="13" r="13" fill="#fff"/><path d="M17.8 5.8 L15 14.8 L8.2 20.2 L11 11.2 Z" fill="#1271ff"/><circle cx="13" cy="13" r="1.3" fill="#fff"/></svg></div>
<div class="nav" style="left:1218px">测试3</div>
<div class="a" style="left:1368px;top:10px;line-height:0"><svg width="24" height="24" viewBox="0 0 24 24"><rect x="1" y="2" width="8" height="8" fill="none" stroke="#fff" stroke-width="2"/><rect x="1" y="14" width="8" height="8" fill="none" stroke="#fff" stroke-width="2"/><rect x="14" y="14" width="8" height="8" fill="none" stroke="#fff" stroke-width="2"/><path d="M18 0.5 L23.5 6 L18 11.5 L12.5 6 Z" fill="#fff"/></svg></div>
<div class="nav" style="left:1320px">企业中枢</div>
<div class="a" style="left:1473px;top:14px;line-height:0"><svg width="26" height="16" viewBox="0 0 26 16"><path d="M7 2 L1.5 8 L7 14 M19 2 L24.5 8 L19 14 M15.5 0.5 L10.5 15.5" fill="none" stroke="#fff" stroke-width="2.2" stroke-linecap="round" stroke-linejoin="round"/></svg></div>
<div class="nav" style="left:1426px">开发平台</div>

<svg class="a" style="left:2210px;top:28px" width="21" height="21" viewBox="0 0 21 21"><path d="M17.5 10.5 A7 7 0 1 1 15 5" fill="none" stroke="#fff" stroke-width="3"/><path d="M12 1.5 L19.5 1.5 L19.5 9 Z" fill="#fff"/></svg>
<svg class="a" style="left:2267px;top:28px" width="21" height="21" viewBox="0 0 21 21"><path d="M4 16 L4 9.5 A6.5 6.5 0 0 1 17 9.5 L17 16" fill="none" stroke="#fff" stroke-width="2.2"/><line x1="1" y1="16.5" x2="20" y2="16.5" stroke="#fff" stroke-width="2.2" stroke-linecap="round"/><path d="M7.5 17.5 A3 3 0 0 0 13.5 17.5" fill="none" stroke="#fff" stroke-width="2"/></svg>
<div class="a" style="left:2284px;top:14px;width:32px;height:22px;background:#ff5722;border-radius:3px;color:#fff;font-size:15px;line-height:22px;text-align:center">17</div>
<svg class="a" style="left:2326px;top:29px" width="18" height="18" viewBox="0 0 18 18"><g fill="none" stroke="#fff" stroke-width="2" stroke-linecap="round"><path d="M1.5 6 L1.5 1.5 L6 1.5 M1.5 1.5 L6.5 6.5"/><path d="M12 1.5 L16.5 1.5 L16.5 6 M16.5 1.5 L11.5 6.5"/><path d="M1.5 12 L1.5 16.5 L6 16.5 M1.5 16.5 L6.5 11.5"/><path d="M16.5 12 L16.5 16.5 L12 16.5 M16.5 16.5 L11.5 11.5"/></g></svg>
<div class="a" style="left:2371px;top:13px;width:44px;height:44px;border-radius:50%;background:#0c4ead;color:#fff;font-size:27px;line-height:44px;text-align:center;font-weight:bold">流</div>
<div class="a" style="left:2419.5px;top:15px;font-size:21px;line-height:21px;color:#fff">流之云</div>
<div class="a" style="left:2419.5px;top:39px;font-size:21px;line-height:21px;color:#fff">系统管理员</div>
</div>

<div id="tabs">
<div class="a" style="left:0;top:75px;width:2560px;height:56px;background:#fff"></div>
<svg class="a" style="left:22px;top:93px" width="20" height="20" viewBox="0 0 20 20"><path d="M9 1.5 L1.5 9 L9 16.5 M17 1.5 L9.5 9 L17 16.5" fill="none" stroke="#4287f5" stroke-width="2" stroke-linecap="round" stroke-linejoin="round"/></svg>
<div class="a" style="left:0;top:129px;width:2560px;height:2px;background:#a9c8fb"></div>
<div class="a" style="left:63px;top:81px;width:79px;height:52px;border:2px solid #a9c8fb;border-bottom:none;border-radius:7px 7px 0 0;background:#fff"></div>
<svg class="a" style="left:74px;top:98px" width="19" height="19" viewBox="0 0 19 19"><path d="M1.5 8 L9.5 1.5 L17.5 8 L17.5 16.5 Q17.5 17.5 16.5 17.5 L2.5 17.5 Q1.5 17.5 1.5 16.5 Z" fill="none" stroke="#4287f5" stroke-width="2.2" stroke-linejoin="round"/><line x1="9.5" y1="11" x2="9.5" y2="14" stroke="#4287f5" stroke-width="2.2" stroke-linecap="round"/></svg>
<div class="a" style="left:96px;top:99.5px;font-size:18px;line-height:18px;color:#4287f5;font-weight:bold">首页</div>
<svg class="a" style="left:2513px;top:93px" width="20" height="20" viewBox="0 0 20 20"><path d="M3 1.5 L10.5 9 L3 16.5 M11 1.5 L18.5 9 L11 16.5" fill="none" stroke="#4287f5" stroke-width="2" stroke-linecap="round" stroke-linejoin="round"/></svg>
</div>

<div id="footer">
<div class="a" style="left:0;top:7px;width:2560px;text-align:center;font-size:18px;line-height:18px;color:#333;letter-spacing:-0.2px">Gadmin V9.0 [当前系统版本：9.0.3]</div>
<div class="a" style="left:2490px;top:18px;font-size:15px;line-height:15px;color:#1f7ae0;font-style:italic">cojz8.com</div>
</div>
<div class="a" style="left:2547px;top:131px;width:13px;height:1063px;background:#f1f1f1"></div>
<div class="a" style="left:2547px;top:200px;width:9px;height:72px;border-radius:5px;background:#e3e3e3"></div>
<div class="a" style="left:2547px;top:230px;width:9px;height:42px;border-radius:0 0 5px 5px;background:linear-gradient(#0be07f,#13a8ff)"></div>


<!--WM--><div class="a" style="left:0;top:0;width:2560px;height:1229px;overflow:hidden;pointer-events:none">
<div class="a" style="left:36px;top:32.0px;width:220px;text-align:center;font-size:20px;line-height:22px;color:rgba(190,190,190,.12);transform:rotate(-21deg)">Id:12025-10-16gadmin</div>
<div class="a" style="left:482px;top:32.0px;width:220px;text-align:center;font-size:20px;line-height:22px;color:rgba(190,190,190,.12);transform:rotate(-21deg)">Id:12025-10-16gadmin</div>
<div class="a" style="left:928px;top:32.0px;width:220px;text-align:center;font-size:20px;line-height:22px;color:rgba(190,190,190,.12);transform:rotate(-21deg)">Id:12025-10-16gadmin</div>
<div class="a" style="left:1374px;top:32.0px;width:220px;text-align:center;font-size:20px;line-height:22px;color:rgba(190,190,190,.12);transform:rotate(-21deg)">Id:12025-10-16gadmin</div>
<div class="a" style="left:1820px;top:32.0px;width:220px;text-align:center;font-size:20px;line-height:22px;color:rgba(190,190,190,.12);transform:rotate(-21deg)">Id:12025-10-16gadmin</div>
<div class="a" style="left:2266px;top:32.0px;width:220px;text-align:center;font-size:20px;line-height:22px;color:rgba(190,190,190,.12);transform:rotate(-21deg)">Id:12025-10-16gadmin</div>
<div class="a" style="left:36px;top:194.5px;width:220px;text-align:center;font-size:20px;line-height:22px;color:rgba(190,190,190,.12);transform:rotate(-21deg)">Id:12025-10-16gadmin</div>
<div class="a" style="left:482px;top:194.5px;width:220px;text-align:center;font-size:20px;line-height:22px;color:rgba(190,190,190,.12);transform:rotate(-21deg)">Id:12025-10-16gadmin</div>
<div class="a" style="left:928px;top:194.5px;width:220px;text-align:center;font-size:20px;line-height:22px;color:rgba(190,190,190,.12);transform:rotate(-21deg)">Id:12025-10-16gadmin</div>
<div class="a" style="left:1374px;top:194.5px;width:220px;text-align:center;font-size:20px;line-height:22px;color:rgba(190,190,190,.12);transform:rotate(-21deg)">Id:12025-10-16gadmin</div>
<div class="a" style="left:1820px;top:194.5px;width:220px;text-align:center;font-size:20px;line-height:22px;color:rgba(190,190,190,.12);transform:rotate(-21deg)">Id:12025-10-16gadmin</div>
<div class="a" style="left:2266px;top:194.5px;width:220px;text-align:center;font-size:20px;line-height:22px;color:rgba(190,190,190,.12);transform:rotate(-21deg)">Id:12025-10-16gadmin</div>
<div class="a" style="left:36px;top:357.0px;width:220px;text-align:center;font-size:20px;line-height:22px;color:rgba(190,190,190,.12);transform:rotate(-21deg)">Id:12025-10-16gadmin</div>
<div class="a" style="left:482px;top:357.0px;width:220px;text-align:center;font-size:20px;line-height:22px;color:rgba(190,190,190,.12);transform:rotate(-21deg)">Id:12025-10-16gadmin</div>
<div class="a" style="left:928px;top:357.0px;width:220px;text-align:center;font-size:20px;line-height:22px;color:rgba(190,190,190,.12);transform:rotate(-21deg)">Id:12025-10-16gadmin</div>
<div class="a" style="left:1374px;top:357.0px;width:220px;text-align:center;font-size:20px;line-height:22px;color:rgba(190,190,190,.12);transform:rotate(-21deg)">Id:12025-10-16gadmin</div>
<div class="a" style="left:1820px;top:357.0px;width:220px;text-align:center;font-size:20px;line-height:22px;color:rgba(190,190,190,.12);transform:rotate(-21deg)">Id:12025-10-16gadmin</div>
<div class="a" style="left:2266px;top:357.0px;width:220px;text-align:center;font-size:20px;line-height:22px;color:rgba(190,190,190,.12);transform:rotate(-21deg)">Id:12025-10-16gadmin</div>
<div class="a" style="left:36px;top:519.5px;width:220px;text-align:center;font-size:20px;line-height:22px;color:rgba(190,190,190,.12);transform:rotate(-21deg)">Id:12025-10-16gadmin</div>
<div class="a" style="left:482px;top:519.5px;width:220px;text-align:center;font-size:20px;line-height:22px;color:rgba(190,190,190,.12);transform:rotate(-21deg)">Id:12025-10-16gadmin</div>
<div class="a" style="left:928px;top:519.5px;width:220px;text-align:center;font-size:20px;line-height:22px;color:rgba(190,190,190,.12);transform:rotate(-21deg)">Id:12025-10-16gadmin</div>
<div class="a" style="left:1374px;top:519.5px;width:220px;text-align:center;font-size:20px;line-height:22px;color:rgba(190,190,190,.12);transform:rotate(-21deg)">Id:12025-10-16gadmin</div>
<div class="a" style="left:1820px;top:519.5px;width:220px;text-align:center;font-size:20px;line-height:22px;color:rgba(190,190,190,.12);transform:rotate(-21deg)">Id:12025-10-16gadmin</div>
<div class="a" style="left:2266px;top:519.5px;width:220px;text-align:center;font-size:20px;line-height:22px;color:rgba(190,190,190,.12);transform:rotate(-21deg)">Id:12025-10-16gadmin</div>
<div class="a" style="left:36px;top:682.0px;width:220px;text-align:center;font-size:20px;line-height:22px;color:rgba(190,190,190,.12);transform:rotate(-21deg)">Id:12025-10-16gadmin</div>
<div class="a" style="left:482px;top:682.0px;width:220px;text-align:center;font-size:20px;line-height:22px;color:rgba(190,190,190,.12);transform:rotate(-21deg)">Id:12025-10-16gadmin</div>
<div class="a" style="left:928px;top:682.0px;width:220px;text-align:center;font-size:20px;line-height:22px;color:rgba(190,190,190,.12);transform:rotate(-21deg)">Id:12025-10-16gadmin</div>
<div class="a" style="left:1374px;top:682.0px;width:220px;text-align:center;font-size:20px;line-height:22px;color:rgba(190,190,190,.12);transform:rotate(-21deg)">Id:12025-10-16gadmin</div>
<div class="a" style="left:1820px;top:682.0px;width:220px;text-align:center;font-size:20px;line-height:22px;color:rgba(190,190,190,.12);transform:rotate(-21deg)">Id:12025-10-16gadmin</div>
<div class="a" style="left:2266px;top:682.0px;width:220px;text-align:center;font-size:20px;line-height:22px;color:rgba(190,190,190,.12);transform:rotate(-21deg)">Id:12025-10-16gadmin</div>
</div><!--/WM-->
</body>
</html>
